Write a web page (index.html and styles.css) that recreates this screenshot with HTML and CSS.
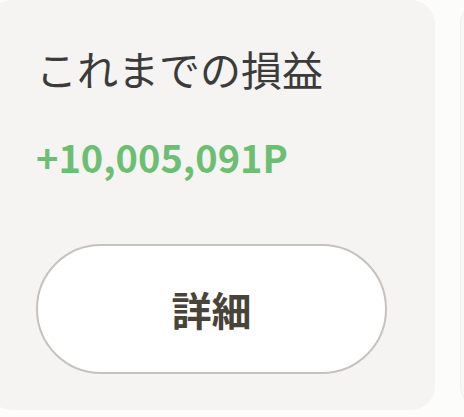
FILE: index.html
```html
<!DOCTYPE html>
<html lang="ja">
<head>
<meta charset="utf-8">
<link rel="stylesheet" href="styles.css">
</head>
<body>
<div class="track">
  <section class="card">
    <h2 class="title">これまでの損益</h2>
    <p class="amount">+10,005,091P</p>
    <button class="detail">詳細</button>
  </section>
  <section class="card card-next"></section>
</div>
</body>
</html>
```
FILE: styles.css
```css
html, body {
  margin: 0;
  padding: 0;
  background: #fcfcfb;
  font-family: "Noto Sans CJK JP", "Noto Sans", sans-serif;
}
.track {
  display: flex;
  gap: 25px;
  margin-left: -12px;
  overflow: hidden;
}
.card {
  flex: none;
  box-sizing: border-box;
  width: 447px;
  height: 410px;
  background: #f5f4f2;
  border-radius: 24px;
  padding: 38px 48px 0;
  display: flex;
  flex-direction: column;
}
.card-next {
  background: #f8f8f7;
  border: 1px solid #f0efee;
}
.title {
  margin: 0;
  font-size: 41px;
  font-weight: 400;
  line-height: 61px;
  color: #3b3b3b;
  white-space: nowrap;
}
.amount {
  margin: 33px 0 0;
  font-size: 38px;
  font-weight: 700;
  line-height: 50px;
  color: #6cbf72;
}
.detail {
  margin-top: 62px;
  height: 130px;
  width: 100%;
  box-sizing: border-box;
  border: 2px solid #c6c2be;
  border-radius: 65px;
  background: #ffffff;
  font-family: inherit;
  font-size: 40px;
  font-weight: 700;
  color: #4a4339;
  padding: 0;
}
```
